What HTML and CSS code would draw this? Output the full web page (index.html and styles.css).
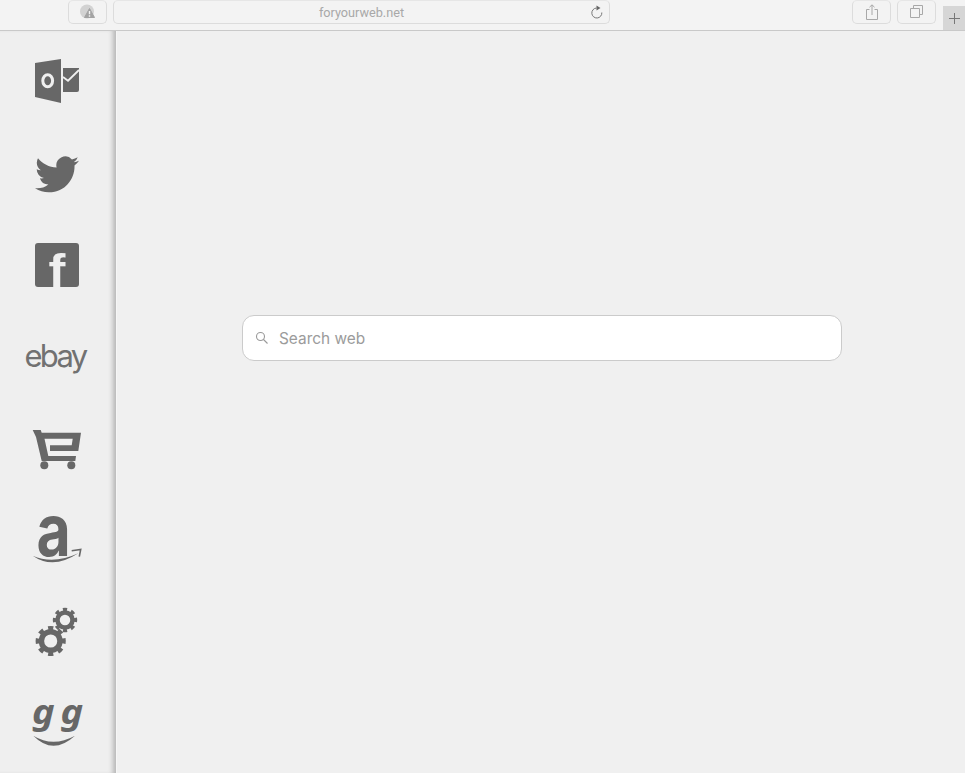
FILE: index.html
```html
<!DOCTYPE html>
<html>
<head>
  <meta charset="utf-8" />
  <title>foryourweb.net</title>
  <link rel="stylesheet" href="styles.css">
</head>
<body>
  <div class="toolbar">
    <div class="tool-btn warn-btn">
      <svg width="16" height="16" viewBox="0 0 16 16">
        <circle cx="7" cy="7.5" r="7" fill="#d2d2d2"/>
        <path d="M9.5 4.5 L14.5 13.5 H4.5 Z" fill="#a3a3a3" stroke="#a3a3a3" stroke-linejoin="round"/>
        <path d="M9.5 7 V10.2 M9.5 11.2 V12.7" stroke="#f3f3f3" stroke-width="1.4"/>
      </svg>
    </div>
    <div class="url-bar">
      <span class="url-text">foryourweb.net</span>
      <svg class="reload" width="14" height="14" viewBox="0 0 14 14">
        <path d="M6.5 3 A5 5 0 1 0 11.8 7.5" fill="none" stroke="#777" stroke-width="1"/>
        <path d="M6.5 0.5 L10.5 3 L6.5 5.5 Z" fill="#666"/>
      </svg>
    </div>
    <div class="tool-right">
      <div class="tool-btn">
        <svg width="14" height="16" viewBox="0 0 14 16">
          <path d="M4.5 5.5 H1.5 V15.5 H12.5 V5.5 H9.5 M7 11 V1 M4.5 3.2 L7 0.8 L9.5 3.2" fill="none" stroke="#a8a8a8"/>
        </svg>
      </div>
      <div class="tool-btn">
        <svg width="14" height="14" viewBox="0 0 14 14">
          <path d="M3.5 3.5 V0.5 H12.5 V9.5 H9.5 M0.5 3.5 H9.5 V12.5 H0.5 Z" fill="none" stroke="#a8a8a8"/>
        </svg>
      </div>
    </div>
    <div class="new-tab">
      <svg width="11" height="11" viewBox="0 0 11 11">
        <path d="M5.5 0 V11 M0 5.5 H11" stroke="#777"/>
      </svg>
    </div>
  </div>

  <div class="page">
    <div class="sidebar">
      <a class="side-item">
        <svg width="48" height="48" viewBox="0 1 48 48">
          <path d="M2 7 L28 3 V47 L2 41 Z" fill="#666"/>
          <ellipse cx="14.7" cy="24.7" rx="4.9" ry="6" fill="none" stroke="#efefef" stroke-width="3"/>
          <path d="M30 12 H46 V34 Q46 36 44 36 H30 Z" fill="#666"/>
          <path d="M30 21 L35 24.7 L46 14" fill="none" stroke="#efefef" stroke-width="1.8"/>
        </svg>
      </a>
      <a class="side-item">
        <svg width="44" height="37" viewBox="0 1.5 24 20">
          <path d="M23.953 4.57a10 10 0 01-2.825.775 4.958 4.958 0 002.163-2.723c-.951.555-2.005.959-3.127 1.184a4.92 4.92 0 00-8.384 4.482C7.69 8.095 4.067 6.13 1.64 3.162a4.822 4.822 0 00-.666 2.475c0 1.71.87 3.213 2.188 4.096a4.904 4.904 0 01-2.228-.616v.06a4.923 4.923 0 003.946 4.827 4.996 4.996 0 01-2.212.085 4.936 4.936 0 004.604 3.417 9.867 9.867 0 01-6.102 2.105c-.39 0-.779-.023-1.17-.067a13.995 13.995 0 007.557 2.209c9.053 0 13.998-7.496 13.998-13.985 0-.21 0-.42-.015-.63A9.935 9.935 0 0024 4.59z" fill="#666"/>
        </svg>
      </a>
      <a class="side-item">
        <svg width="44" height="44" viewBox="0 0 44 44">
          <rect width="44" height="44" rx="3" fill="#666"/>
          <text class="logo-f" transform="translate(13.5 44) scale(1.1 1)">f</text>
        </svg>
      </a>
      <a class="side-item">
        <svg width="66" height="30" viewBox="0 0 66 30">
          <text class="logo-ebay" x="0.5" y="24.5">ebay</text>
        </svg>
      </a>
      <a class="side-item">
        <svg width="52" height="48" viewBox="0 1 52 48">
          <path d="M1.7 6 H9.7 L10.7 8.7 H50 L47.3 27 H19 V21.3 H40.7 L41.7 14.7 H13.5 L17.3 32 H45 L44.3 37 H10.7 L5 13 Z" fill="#666"/>
          <circle cx="13.3" cy="41.3" r="4" fill="#666"/>
          <circle cx="40.3" cy="41.3" r="4" fill="#666"/>
        </svg>
      </a>
      <a class="side-item">
        <svg width="52" height="52" viewBox="0 0 52 52">
          <text class="logo-a" transform="translate(5.5 41) scale(.82 1)">a</text>
          <path d="M1.7 40.7 Q22 55 47.3 38.3 Q22 50 1.7 40.7 Z" fill="#666"/>
          <path d="M40.7 35.7 L49.7 34.5 L48.3 41.7" fill="none" stroke="#666" stroke-width="1.6"/>
        </svg>
      </a>
      <a class="side-item">
        <svg width="48" height="52" viewBox="0 1 48 52">
          <circle cx="32" cy="14" r="7.5" fill="none" stroke="#666" stroke-width="4.5"/>
          <circle cx="32" cy="14" r="10.5" fill="none" stroke="#666" stroke-width="3.4" pathLength="16" stroke-dasharray="1 1" transform="rotate(-11.25 32 14)"/>
          <circle cx="17.7" cy="35" r="9.3" fill="none" stroke="#666" stroke-width="5.5"/>
          <circle cx="17.7" cy="35" r="13" fill="none" stroke="#666" stroke-width="4.2" pathLength="16" stroke-dasharray="1 1" transform="rotate(-11.25 17.7 35)"/>
        </svg>
      </a>
      <a class="side-item">
        <svg width="52" height="52" viewBox="0 0 52 52">
          <text class="logo-g" transform="translate(1 24.5) scale(1.12 1)">g</text>
          <text class="logo-g" transform="translate(29.5 24.5) scale(1.12 1)">g</text>
          <path d="M2.3 36.7 Q22 56.7 44 36.7 Q22 48.7 2.3 36.7 Z" fill="#666"/>
        </svg>
      </a>
    </div>
    <div class="main">
      <div class="search-box">
        <svg width="14" height="14" viewBox="0 0 14 14">
          <circle cx="5.5" cy="5.5" r="4" fill="none" stroke="#999" stroke-width="1.1"/>
          <path d="M8.5 8.5 L12.5 12.5" stroke="#999" stroke-width="1.1"/>
        </svg>
        <span class="search-text">Search web</span>
      </div>
    </div>
  </div>
</body>
</html>
```

FILE: styles.css
```css
* {
  margin: 0;
  padding: 0;
  box-sizing: border-box;
}

body {
  font-family: 'Liberation Sans', Arial, sans-serif;
  background: #f0f0f0;
  height: 773px;
  overflow: hidden;
}

.toolbar {
  display: flex;
  align-items: flex-start;
  height: 31px;
  padding-left: 68px;
  background: #f3f3f3;
  border-bottom: 1px solid #c9c9c9;
}

.tool-btn {
  width: 39px;
  height: 24px;
  display: flex;
  align-items: center;
  justify-content: center;
  border: 1px solid #dcdcdc;
  border-top-color: #e6e6e6;
  border-radius: 5px;
}

.url-bar {
  position: relative;
  width: 497px;
  height: 24px;
  margin-left: 6px;
  display: flex;
  align-items: center;
  justify-content: center;
  border: 1px solid #dcdcdc;
  border-top-color: #e6e6e6;
  border-radius: 5px;
}

.url-text {
  font-family: Roboto, sans-serif;
  font-size: 12.7px;
  color: #a8a8a8;
}

.reload {
  position: absolute;
  right: 5px;
  top: 4px;
}

.tool-right {
  display: flex;
  gap: 6px;
  margin-left: auto;
  margin-right: 7px;
}

.new-tab {
  width: 22px;
  height: 24px;
  margin-top: 6px;
  display: flex;
  align-items: center;
  justify-content: center;
  background: #d6d6d6;
}

.page {
  display: flex;
  height: 742px;
}

.sidebar {
  width: 117px;
  flex-shrink: 0;
  padding-top: 4px;
  padding-right: 2px;
  background: #efefef;
  border-right: 1px solid #f6f6f6;
  box-shadow: inset -6px 0 5px -3px #b5b5b5;
}

.side-item {
  height: 92px;
  display: flex;
  align-items: center;
  justify-content: center;
}

.side-item svg {
  overflow: visible;
  opacity: 0.99;
}

.logo-f {
  font-family: 'Liberation Sans', sans-serif;
  font-size: 46px;
  font-weight: 700;
  fill: #efefef;
}

.logo-ebay {
  font-family: Inter, sans-serif;
  font-size: 31px;
  letter-spacing: -2.7px;
  fill: #707070;
}

.logo-a {
  font-family: Inter, sans-serif;
  font-size: 72px;
  font-weight: 700;
  fill: #666;
}

.logo-g {
  font-family: 'Noto Sans', sans-serif;
  font-size: 34px;
  font-weight: 700;
  font-style: italic;
  fill: #666;
}

.main {
  flex: 1;
  display: flex;
  justify-content: center;
  align-items: flex-start;
  padding-top: 284px;
  padding-left: 2px;
}

.search-box {
  width: 600px;
  height: 46px;
  display: flex;
  align-items: center;
  gap: 10px;
  padding-left: 12px;
  background: #fff;
  border: 1px solid #cbcbcb;
  border-radius: 12px;
}

.search-text {
  font-family: Inter, sans-serif;
  font-size: 15.4px;
  color: #9b9b9b;
}
```
